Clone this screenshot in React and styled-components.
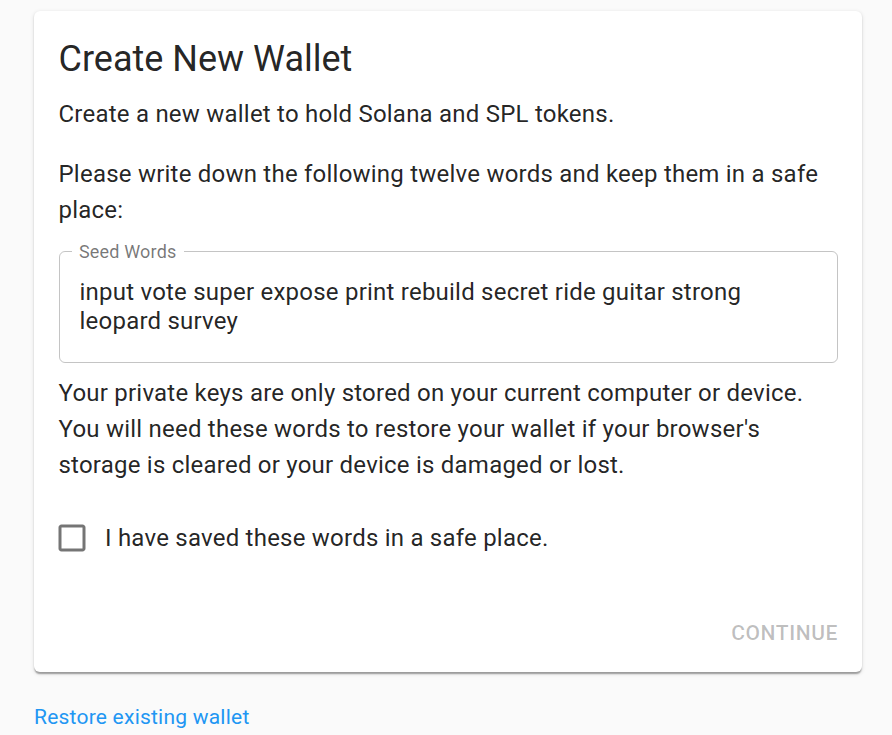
import React from "react";
import styled, { createGlobalStyle } from "styled-components";

const GlobalStyle = createGlobalStyle`
  html, body {
    margin: 0;
    padding: 0;
    background: #fafafa;
    font-family: Roboto, "Liberation Sans", sans-serif;
    color: rgba(0, 0, 0, 0.87);
  }
`;

const Page = styled.div`
  padding: 11px 30px 0 34px;
`;

const Card = styled.div`
  background: #fff;
  border-radius: 6px;
  box-shadow: 0 3px 1.5px -1.5px rgba(0, 0, 0, 0.2), 0 1.5px 1.5px 0 rgba(0, 0, 0, 0.14),
    0 1.5px 4.5px 0 rgba(0, 0, 0, 0.12);
`;

const Content = styled.div`
  padding: 24px 24px 37px 24.5px;
`;

const Title = styled.h2`
  margin: 0 0 12.6px;
  font-size: 36px;
  font-weight: 400;
  line-height: 48px;
`;

const Body = styled.p`
  margin: 0 0 ${props => (props.$gutter ? "24px" : "0")};
  font-size: 24px;
  line-height: 36px;
  letter-spacing: 0.225px;
`;

const Fieldset = styled.fieldset`
  margin: -9px 0 12px;
  padding: 0 12px;
  border: 1px solid rgba(0, 0, 0, 0.23);
  border-radius: 6px;
`;

const Legend = styled.legend`
  padding: 0 7.5px;
  font-size: 18px;
  line-height: 18px;
  letter-spacing: 0.17px;
  color: rgba(0, 0, 0, 0.54);
`;

const SeedText = styled.div`
  padding: 17.75px 8px 27px;
  font-size: 24px;
  line-height: 28.5px;
  letter-spacing: 0.225px;
`;

const CheckRow = styled.label`
  display: flex;
  align-items: center;
  margin: 23px 0 0 -18px;
  font-size: 24px;
  line-height: 36px;
  letter-spacing: 0.225px;
  cursor: pointer;
`;

const CheckBox = styled.span`
  display: flex;
  padding: 13.5px 15px 13.5px 13.5px;
  svg {
    width: 36px;
    height: 36px;
    fill: rgba(0, 0, 0, 0.54);
  }
`;

const Actions = styled.div`
  display: flex;
  justify-content: flex-end;
  padding: 0 12px 11px;
`;

const TextButton = styled.button`
  border: 0;
  background: none;
  padding: 9px 12px;
  font-family: inherit;
  font-size: 21px;
  font-weight: 500;
  line-height: 36.75px;
  letter-spacing: 0.6px;
  text-transform: uppercase;
  color: rgba(0, 0, 0, 0.26);
`;

const RestoreLink = styled.a`
  display: block;
  width: max-content;
  margin: 30px 0 0;
  font-size: 21px;
  line-height: 30px;
  letter-spacing: 0.225px;
  color: #2196f3;
  text-decoration: none;
`;

export default function App() {
  return (
    <Page>
      <GlobalStyle />
      <Card>
        <Content>
          <Title>Create New Wallet</Title>
          <Body $gutter>Create a new wallet to hold Solana and SPL tokens.</Body>
          <Body $gutter>Please write down the following twelve words and keep them in a safe place:</Body>
          <Fieldset>
            <Legend>Seed Words</Legend>
            <SeedText>
              input vote super expose print rebuild secret ride guitar strong leopard survey
            </SeedText>
          </Fieldset>
          <Body>
            Your private keys are only stored on your current computer or device. You will need these words to
            restore your wallet if your browser's storage is cleared or your device is damaged or lost.
          </Body>
          <CheckRow>
            <CheckBox>
              <svg viewBox="0 0 24 24">
                <path d="M19 5v14H5V5h14m0-2H5c-1.11 0-2 .9-2 2v14c0 1.1.89 2 2 2h14c1.1 0 2-.9 2-2V5c0-1.1-.9-2-2-2z" />
              </svg>
            </CheckBox>
            I have saved these words in a safe place.
          </CheckRow>
        </Content>
        <Actions>
          <TextButton disabled>Continue</TextButton>
        </Actions>
      </Card>
      <RestoreLink href="#">Restore existing wallet</RestoreLink>
    </Page>
  );
}
